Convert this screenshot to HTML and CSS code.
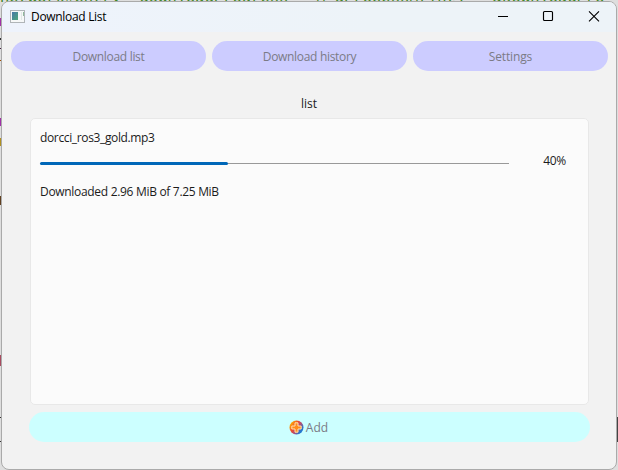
FILE: index.html
```
<!DOCTYPE html>
<html lang="en">
<head>
<meta charset="utf-8">
<title>Download List</title>
<link rel="stylesheet" href="styles.css">
</head>
<body>
<div class="backdrop" aria-hidden="true">
  <div class="code">network#entry  downloadProgress   M dProcessM(int)   &amp;DownloadPro</div>
  <i class="mark m1"></i><i class="mark m2"></i><i class="mark m3"></i><i class="mark m4"></i><i class="mark m5"></i><i class="mark m6"></i><i class="mark m7"></i><i class="mark m8"></i><i class="mark m9"></i><i class="mark m10"></i>
</div>
<main class="window">
  <header class="titlebar">
    <svg class="app-icon" width="15" height="13" viewBox="0 0 15 13">
      <defs><linearGradient id="pane" x2="1" y2="1"><stop offset="0" stop-color="#4878a8"/><stop offset="1" stop-color="#4fa87a"/></linearGradient></defs>
      <rect x=".5" y=".5" width="14" height="12" fill="#f6f8f8" stroke="#b0b5b8"/>
      <rect x="2" y="2" width="6" height="8" fill="url(#pane)"/>
      <path d="M11.5 2v8" stroke="#e1e7e4"/><path d="M13.5 2v4" stroke="#8fb89b"/>
    </svg>
    <h1 class="title"><span class="t-title">Download List</span></h1>
    <div class="controls">
      <svg width="46" height="30" viewBox="0 0 46 30"><path d="M18 14.5h10" stroke="#000"/></svg>
      <svg width="46" height="30" viewBox="0 0 46 30"><rect x="17.5" y="9.5" width="9" height="9" rx="1" fill="none" stroke="#000" stroke-width="1.15"/></svg>
      <svg width="46" height="30" viewBox="0 0 46 30"><path d="M17 9.3l10 10M27 9.3l-10 10" stroke="#000" stroke-width="1.1"/></svg>
    </div>
  </header>
  <nav class="tabs">
    <button class="tab"><span class="t-list">Download list</span></button>
    <button class="tab"><span class="t-history">Download history</span></button>
    <button class="tab"><span class="t-settings">Settings</span></button>
  </nav>
  <h2 class="caption">list</h2>
  <section class="panel">
    <div class="file"><span class="t-file">dorcci_ros3_gold.mp3</span></div>
    <div class="progress-row">
      <div class="track"><div class="fill" style="width:40%"></div></div>
      <span class="percent">40%</span>
    </div>
    <div class="status"><span class="t-status">Downloaded 2.96 MiB of 7.25 MiB</span></div>
  </section>
  <button class="add">
    <svg width="15" height="15" viewBox="0 0 15 15">
      <defs>
        <linearGradient id="disc" x1="0" y1=".1" x2="1" y2=".8"><stop offset=".1" stop-color="#ffb000"/><stop offset=".4" stop-color="#f0482c"/><stop offset=".62" stop-color="#a8507d"/><stop offset=".85" stop-color="#2478d0"/></linearGradient>
      </defs>
      <circle cx="7.5" cy="7.5" r="7" fill="url(#disc)"/>
      <path d="M6 2.8h3V6h3.2v3H9v3.2H6V9H2.8V6H6z" fill="#ff8a1c" stroke="#ffe3ae"/>
    </svg>
    <span class="t-add">Add</span>
  </button>
</main>
</body>
</html>
```
FILE: styles.css
```
* { box-sizing: border-box; }
body {
  margin: 0; width: 618px; height: 470px; overflow: hidden;
  padding: 1px 1px 0 1px; position: relative; background: #dedede;
  font: 12px/16px "Open Sans", "Noto Sans", sans-serif; color: #1b1b1b;
}
.backdrop { position: absolute; inset: 0; overflow: hidden; }
.code {
  position: absolute; left: 0; top: -11px; white-space: pre;
  font: 15.5px/18px "Liberation Mono", monospace; color: #3c8420;
}
.mark { position: absolute; left: 0; width: 2px; background: #333; }
.m1 { top: 18px; height: 8px; background: #a030a8; }
.m2 { top: 38px; height: 2px; }
.m3 { top: 48px; height: 1px; background: #402040; }
.m4 { top: 60px; height: 1px; background: #a05000; }
.m5 { top: 118px; height: 8px; background: #a030a8; }
.m6 { top: 138px; height: 8px; background: #b09020; }
.m7 { top: 196px; height: 9px; background: #604020; }
.m8 { top: 355px; height: 11px; background: #a84c60; }
.m9 { top: 417px; height: 25px; background: none; border: solid #333; border-width: 1px 0; }
.m10 { left: auto; right: 0; top: 417px; height: 25px; width: 1px; background: #444; }
.window {
  position: relative; width: 616px; height: 469px; display: flex; flex-direction: column;
  background: #f2f2f2; border: 1px solid #aaa; border-radius: 8px; overflow: hidden;
}
.titlebar {
  flex: 0 0 30px; display: flex; align-items: flex-start; padding-left: 8px;
  background: linear-gradient(90deg, #eef3fc, #edf3f8 60%);
}
.app-icon { margin-top: 8px; }
.title { margin: 7px 0 0 6px; font-size: 12px; line-height: 16px; font-weight: 400; color: #000; }
.controls { margin: 0 -2px 0 auto; display: flex; }
span { white-space: nowrap; }
.t-title, .t-list, .t-history, .t-status { letter-spacing: -.31px; }
.t-file { letter-spacing: -.36px; }
.t-settings { letter-spacing: -.15px; }
.percent { letter-spacing: -.3px; }
button { border: 0; padding: 0; font: inherit; color: #7b7b86; }
.tabs { display: flex; gap: 6px; margin: 9px 8px 0 9px; }
.tab { flex: 1; height: 30px; border-radius: 15px; background: #ccccff; padding-top: 2px; }
.caption { margin: 25px 0 0; text-align: center; font-size: 12px; line-height: 16px; font-weight: 400; }
.panel {
  margin: 6px 27px 0 28px; height: 287px; padding: 11px 22px 0 9px;
  background: #fbfbfb; border: 1px solid #e8e8e8; border-radius: 5px;
}
.file, .status { line-height: 16px; }
.progress-row { display: flex; align-items: center; margin-top: 7px; height: 16px; }
.track {
  width: 469px; height: 3px; margin-top: 4px;
  background: linear-gradient(#0000 1px, #999 1px, #999 2px, #0000 2px);
}
.fill { height: 3px; border-radius: 2px; background: #0067b8; }
.percent { margin-left: auto; }
.status { margin-top: 15px; }
.add {
  display: flex; justify-content: center; align-items: center; gap: 2px;
  height: 30px; margin: 7px 26px 0 27px; padding-right: 2px; border-radius: 15px; background: #ccffff;
}
.t-add { padding-top: 1px; }
```
